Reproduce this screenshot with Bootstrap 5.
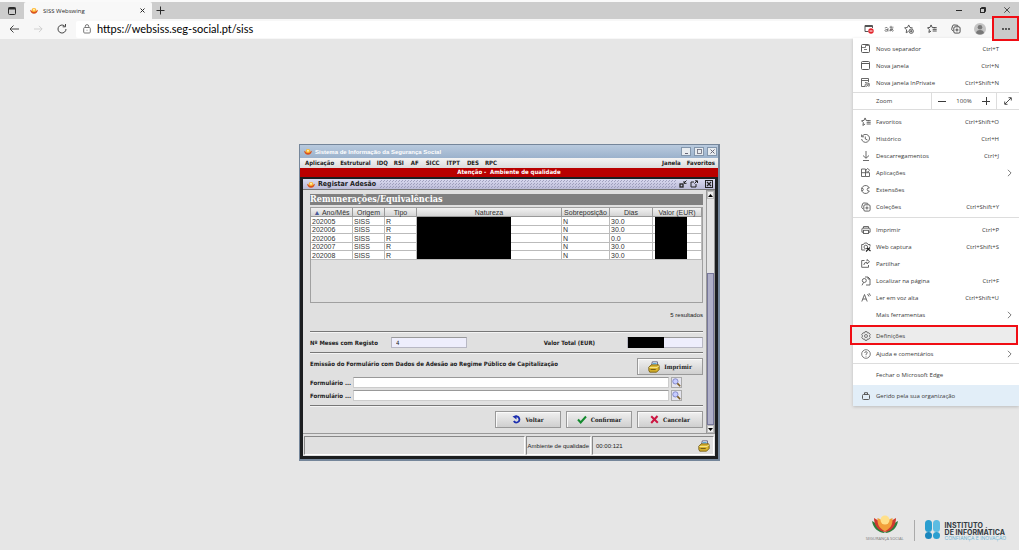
<!DOCTYPE html>
<html lang="pt">
<head>
<meta charset="utf-8">
<meta name="viewport" content="width=device-width, initial-scale=1">
<title>SISS Webswing</title>
<link href="https://cdn.jsdelivr.net/npm/bootstrap@5.3.0/dist/css/bootstrap.min.css" rel="stylesheet">
<style>
  body { font-family: "Open Sans", sans-serif; font-size: 6px; line-height: 8px; color: #2b2b2b; background: #e6e6e6; border-top: 2px solid #fafafa; }
  button, input { font: inherit; color: inherit; padding: 0; border: 0; background: none; border-radius: 0; min-width: 0; line-height: inherit; }
  svg { display: block; flex: none; fill: none; stroke: currentColor; stroke-width: 1; }

  /* browser chrome */
  .tabstrip { background: #cdcdcd; height: 17px; }
  .tab-actions { width: 24px; }
  .page-tab { width: 128px; background: #f8f8f8; padding: 0 7px 0 6px; gap: 5px; border-radius: 2px 2px 0 0; }
  .win-ctl { width: 24px; height: 15px; display: flex; align-items: center; justify-content: center; }
  .toolbar { background: #f7f7f7; height: 20px; z-index: 10; padding-left: 2px; }
  .nav-btn { width: 24px; height: 20px; display: flex; align-items: center; justify-content: center; color: #444; }
  .address { background: #fff; height: 17px; border-radius: 2px; margin-left: 2px; padding: 0 1px 0 7px; gap: 6px; }
  .address input { font-family: Lato, "Open Sans", sans-serif; font-size: 11px; line-height: 16px; height: 16px; color: #000; outline: 0; }
  .bar-icon { width: 20px; height: 17px; display: flex; align-items: center; justify-content: center; color: #555; }
  .more-btn { width: 27px; height: 25px; background: #cacaca; border: 2px solid #f00d14; z-index: 12; margin: -3px 0 -2px 0; display: flex; align-items: center; justify-content: center; }

  /* settings menu */
  .edge-menu { right: 0; top: 19px; width: 166px; background: #fff; z-index: 11; box-shadow: 0 1px 3px rgba(0,0,0,.18); padding-top: 2px; color: #3a3a3a; }
  .mi { display: flex; align-items: center; width: 100%; height: 17px; padding-left: 7px; text-align: left; }
  .mi .lbl { flex: 1; margin-left: 5px; }
  .mi .ico { width: 11px; display: flex; justify-content: center; color: #5a5a5a; }
  .mi .tail { width: 20px; display: flex; justify-content: center; color: #5a5a5a; }
  .zoomrow { border-top: 1px solid #ddd; border-bottom: 1px solid #ddd; height: 18px; margin: 1px 0 3px; }
  .zoomrow .lbl { padding-left: 23px; width: 78px; }
  .zoomrow .ctl { border-left: 1px solid #ddd; height: 16px; padding: 0 6px; width: 65px; }
  .zoomrow .full { border-left: 1px solid #ddd; height: 16px; width: 23px; display: flex; align-items: center; justify-content: center; }
  .menu-line { border-top: 1px solid #ddd; margin: 2px 0 3px; }
  .menu-line.last { margin: 1px 0; }
  .mi.closing { height: 20px; }
  .mi.picked { background: #ececec; border: 2px solid #f00d14; height: 20px; padding: 2px 0 0 8px; margin: 2px 0 0 -3px; width: 168px; }
  .mi.managed { background: #e2eef8; height: 21px; }

  /* remote desktop area */
  .stage { min-height: calc(100vh - 39px); padding-top: 105px; }
  .swing { width: 421px; border: 1px solid #75869a; border-right-width: 2px; border-bottom-width: 2px; background: #e0e0e0; font-family: "DejaVu Sans Condensed", "DejaVu Sans", sans-serif; color: #222; }
  .swing-title { height: 13px; background: linear-gradient(#b9cade, #9bb2cc); color: #fff; font-family: "Liberation Sans", sans-serif; font-weight: 700; padding: 0 1px 0 4px; gap: 3px; }
  .sq-gap { gap: 3px; }
  .sq-btn { width: 10px; height: 9px; background: #e8ecf0; border: 1px solid #8396ac; display: flex; align-items: center; justify-content: center; color: #667; }
  .swing-menu { height: 10px; background: linear-gradient(#f4f4f4, #dcdcdc); font-weight: 700; padding: 0 3px 0 5px; gap: 6px; }
  .swing-menu a { color: #222; text-decoration: none; }
  .swing-menu .abbr { margin-left: 1px; }
  .warn { height: 9px; background: #b80000; color: #fff; font-weight: 700; }
  .inner { border: 3px solid #1c1e20; border-top-width: 2px; background: #e0e0e0; }
  .inner-title { height: 11px; background: linear-gradient(#dadaf0, #bcbcd8); border-bottom: 1px solid #777; color: #222; font-size: 7px; font-weight: 700; padding: 0 2px 0 4px; gap: 3px; }
  .grip { flex: 1; height: 8px; background-image: radial-gradient(#8e8eae 35%, transparent 40%), radial-gradient(#8e8eae 35%, transparent 40%); background-size: 3px 3px; background-position: 0 0, 1px 2px; opacity: .7; }
  .pane { padding: 4px 3px 5px 7px; border-bottom: 1px solid #999; }
  .vbar { width: 9px; border: 1px solid #999; background: #e4e4e4; }
  .vbar .arrow { height: 8px; display: flex; align-items: center; justify-content: center; background: #eee; border: 1px solid #bbb; }
  .vbar .track { flex: 74; }
  .vbar .thumb { flex: 150; background: radial-gradient(#8484a4 35%, #b0b0c8 45%); background-size: 2px 2px; border: 1px solid #77779a; }
  .head-band { background: #808080; color: #fff; font-family: "DejaVu Serif Condensed", "DejaVu Serif", serif; font-weight: 700; font-size: 9px; line-height: 10px; height: 11px; margin-bottom: 2px; }
  .grid-box { border: 1px solid #a0a0a0; height: 96px; margin-bottom: 8px; }
  .grid-tbl { width: 100%; table-layout: fixed; border-collapse: separate; border-spacing: 0; font-family: "Liberation Sans", sans-serif; font-size: 7px; line-height: 7px; color: #333; }
  .grid-tbl th { font-weight: 400; text-align: center; height: 9px; padding: 0; background: linear-gradient(#f2f2f2, #d4d4d4); border-right: 1px solid #999; border-bottom: 1px solid #999; white-space: nowrap; }
  .grid-tbl td { background: #fff; padding: 0 0 0 1px; border-right: 1px solid #bbb; border-bottom: 1px solid #bbb; height: 9px; }
  .grid-tbl tr:nth-child(even) td { height: 8px; }
  .sort-up { color: #4a5a9a; }
  .c-date { width: 42px; } .c-short { width: 32px; } .c-over { width: 48px; } .c-days { width: 43px; } .c-value { width: 49px; }
  .veil { background: #000; top: 9px; height: 42px; }
  .veil-nature { left: 106px; width: 94px; }
  .veil-value { right: 15px; width: 32px; }
  .veil-total { background: #000; left: 1px; top: 0; width: 36px; height: 11px; }
  .results { font-family: "Liberation Sans", sans-serif; margin-bottom: 12px; }
  .rule { border-top: 1px solid #777; border-bottom: 1px solid #f4f4f4; height: 2px; }
  .bold { font-weight: 700; white-space: nowrap; }
  .form-head { padding-top: 2px; }
  .fld { background: #eeeefc; border: 1px solid #b8b8c4; border-top-color: #999; height: 11px; }
  .fld.plain { background: #fff; border-color: #ccc; border-top-color: #999; }
  .frow { margin-top: 2px; padding-right: 21px; gap: 2px; }
  .sbtn { width: 66px; height: 17px; border: 1px solid #999; background: linear-gradient(#f0f0f0, #cfcfcf); font-family: "DejaVu Serif Condensed", "DejaVu Serif", serif; font-weight: 700; display: flex; align-items: center; justify-content: center; gap: 4px; box-shadow: inset 1px 1px #fafafa; }
  .actions { gap: 5px; }
  .lookup { width: 11px; height: 11px; border: 1px solid #aaa; background: #e4e4ee; display: flex; align-items: center; justify-content: center; }
  .status { padding: 2px 1px 1px; gap: 1px; font-family: "Liberation Sans", sans-serif; }
  .status > div { height: 19px; border: 1px solid #888; border-right-color: #fff; border-bottom-color: #fff; display: flex; align-items: center; }
  .st-env { padding: 0 1px; }
  .st-time { width: 122px; padding: 0 3px; }
  .w-label { width: 41px; }
  .w-meses { width: 81px; } .w-small { width: 76px; }

  .logos { margin-top: auto; padding: 0 13px 9px 0; gap: 10px; color: #333; }
  .ss-mark { gap: 3px; }
  .ss-name { font-size: 4px; line-height: 5px; color: #777; }
  .ii { font-family: Inter, "Open Sans", sans-serif; font-weight: 700; font-size: 7px; line-height: 7px; color: #333b42; border-left: 1px solid #aaa; padding-left: 10px; }
  .ii-text { padding-top: 2px; }
  .ii small { font-size: 5px; line-height: 5px; font-weight: 400; color: #72b7d6; display: block; }
</style>
</head>
<body>
<svg width="0" height="0" class="position-absolute" aria-hidden="true">
  <symbol id="flower" viewBox="0 0 26 18"><g stroke="none"><path d="M0 6C1 13 6 17.500 13 18C9 14 5 8 0 6Z" fill="#2f7d3b"/><path d="M26 6C25 13 20 17.500 13 18C17 14 21 8 26 6Z" fill="#2f7d3b"/><path d="M2 3C2 10 6 16 13 17C12 11 8 6 2 3Z" fill="#cf3a30"/><path d="M24 3C24 10 20 16 13 17C14 11 18 6 24 3Z" fill="#cf3a30"/><path d="M5.500 3C5 10 8 14 13 16C18 14 21 10 20.500 3C17 4 15 6 13 9C11 6 9 4 5.500 3Z" fill="#f2a03a"/><circle cx="13" cy="5" r="4.500" fill="#ffe08a"/></g></symbol>
  <symbol id="sun" viewBox="0 0 10 8"><g stroke="none"><path d="M0 3Q1 8 5 8Q9 8 10 3Q7 5 5 5Q3 5 0 3Z" fill="#d9531e"/><ellipse cx="5" cy="3.500" rx="3" ry="2.500" fill="#ffb62e"/><circle cx="5" cy="3" r="1.300" fill="#fff0b0"/></g></symbol>
  <symbol id="fav" viewBox="0 0 16 16"><path d="M6.500 1.500L8.300 5.500L12.500 6M6.500 1.500L4.700 5.500L.8 6L3.800 9L3 13.500L6.500 11.300M9 8.500H15.500M9 11.200H15.500M11 5.800H15.500"/></symbol>
  <symbol id="coll" viewBox="0 0 16 16"><path d="M3.500 11.500L2 10Q.8 9 1.200 7.500L2.500 3Q3 1.300 5 1.500L10 2Q11.500 2.200 11.500 4"/><rect x="4.500" y="4.500" width="10" height="10" rx="2"/><path d="M9.500 7V12M7 9.500H12"/></symbol>
  <symbol id="printer" viewBox="0 0 16 16"><path d="M4 5V2.500H12V5M4 11.500H1.500V6.500Q1.500 5 3 5H13Q14.500 5 14.500 6.500V11.500H12"/><rect x="4" y="8.500" width="8" height="5"/></symbol>
  <symbol id="chev" viewBox="0 0 6 10"><path d="M1 1L5 5L1 9"/></symbol>
  <symbol id="goldprint" viewBox="0 0 14 14"><path d="M4 6L5 1H11L11 6" fill="#eef6ff" stroke="#557"/><path d="M1 7L4 4.500H12.500L13 6V10L10 13H2L1 11Z" fill="#d9b32c" stroke="#6d5510"/><path d="M1.500 7.500H10.500L13 5.500" stroke="#fff0a0"/><path d="M3 10H9" stroke="#5b4a14"/><path d="M5.500 3H10" stroke="#3a9ad0"/></symbol>
  <symbol id="glass" viewBox="0 0 12 12"><circle cx="4.500" cy="4.500" r="3.500" fill="#c6ccff" stroke="#7076b8"/><path d="M7.200 7.200L11 11" stroke="#7a5a20" stroke-width="2"/></symbol>
</svg>

<header>
  <div class="tabstrip d-flex">
    <button class="tab-actions d-flex align-items-center justify-content-center" aria-label="Ações de separador"><svg width="8" height="8" viewBox="0 0 8 8"><rect x=".5" y=".5" width="7" height="7" rx="1"/><path d="M.5 1.500H7.500" stroke-width="2"/></svg></button>
    <div class="page-tab d-flex align-items-center">
      <svg width="8" height="7"><use href="#sun"/></svg><span class="flex-grow-1">SISS Webswing</span>
      <button aria-label="Fechar"><svg width="5" height="5" viewBox="0 0 5 5"><path d="M.5 .5L4.500 4.500M4.500 .5L.5 4.500"/></svg></button>
    </div>
    <button class="px-1" aria-label="Novo separador"><svg width="9" height="9" viewBox="0 0 9 9"><path d="M4.500 .5V8.500M.5 4.500H8.500"/></svg></button>
    <div class="d-flex ms-auto">
      <button class="win-ctl" aria-label="Minimizar"><svg width="6" height="6" viewBox="0 0 6 6"><path d="M0 3.500H6"/></svg></button>
      <button class="win-ctl" aria-label="Restaurar"><svg width="6" height="6" viewBox="0 0 6 6"><path d="M1.500 1.500V.5H5.500V4.500H4.500"/><rect x=".5" y="1.500" width="4" height="4"/></svg></button>
      <button class="win-ctl" aria-label="Fechar janela"><svg width="6" height="6" viewBox="0 0 6 6"><path d="M.3 .3L5.700 5.700M5.700 .3L.3 5.700" stroke-width=".8"/></svg></button>
    </div>
  </div>

  <div class="toolbar d-flex align-items-center position-relative">
    <button class="nav-btn" aria-label="Retroceder"><svg width="10" height="8" viewBox="0 0 10 8"><path d="M10 4H1M4.500 .5L1 4L4.500 7.500"/></svg></button>
    <button class="nav-btn" aria-label="Avançar"><svg width="9" height="8" viewBox="0 0 10 8" color="#ccc"><path d="M0 4H9M5.500 .5L9 4L5.500 7.500"/></svg></button>
    <button class="nav-btn" aria-label="Atualizar"><svg width="10" height="10" viewBox="0 0 10 10"><path d="M9 5A4 4 0 1 1 7.500 1.900M8.500 0V2.800H5.700"/></svg></button>
    <div class="address d-flex align-items-center flex-grow-1">
      <svg width="8" height="10" viewBox="0 0 8 10" color="#777"><rect x=".7" y="3.500" width="6.600" height="5.500" rx="1"/><path d="M2.300 3.500V2.300A1.700 1.700 0 0 1 5.700 2.300V3.500M4 5.800V6.600" /></svg>
      <input class="flex-grow-1" type="text" aria-label="Endereço" value="https://websiss.seg-social.pt/siss">
      <div class="d-flex">
        <button class="bar-icon" aria-label="Pop-up bloqueado"><svg width="10" height="10" viewBox="0 0 10 10"><path d="M4.500 7.500H1V1.500H8.500V4M1 2.500H8.500"/><circle cx="7" cy="7" r="2.700" fill="#e3242b" stroke="none"/><path d="M5.500 7H8.500" stroke="#fff"/></svg></button>
        <button class="bar-icon" aria-label="Traduzir"><svg width="10" height="8" viewBox="0 0 10 8"><path d="M.8 3Q3.500 1.500 4 3.500V6.500M4 4.500Q.8 4.200 .8 5.600Q1.500 7.300 4 5.500M5.500 2.200H9.500M7 .8V5.800M8.800 3.300Q7.500 6.500 5.800 6Q5.200 4.200 8 4Q10.200 4.800 8.500 6.700" stroke-width=".7"/></svg></button>
        <button class="bar-icon" aria-label="Adicionar aos favoritos"><svg width="10" height="10" viewBox="0 0 16 16"><g stroke-width="1.500"><path d="M14 6.500L9.500 5.500L7.500 1.500L5.500 5.500L1 6.200L4.200 9.300L3.500 14L7 12"/><circle cx="11.500" cy="11.500" r="3.500"/><path d="M11.500 9.500V13.500M9.500 11.500H13.500"/></g></svg></button>
      </div>
    </div>
    <div class="d-flex align-items-center">
      <button class="nav-btn" aria-label="Favoritos"><svg width="10" height="10"><use href="#fav" stroke-width="1.500"/></svg></button>
      <button class="nav-btn" aria-label="Coleções"><svg width="10" height="10"><use href="#coll" stroke-width="1.500"/></svg></button>
      <button class="nav-btn" aria-label="Perfil"><svg width="12" height="12" viewBox="0 0 12 12"><g stroke="none"><circle cx="6" cy="6" r="6" fill="#c4c4c4"/><circle cx="6" cy="4.300" r="2.300" fill="#777"/><path d="M2 10Q2.500 7 6 7Q9.500 7 10 10Q6 13 2 10Z" fill="#777"/></g></svg></button>
      <button class="more-btn position-relative" aria-label="Definições e mais"><svg width="8" height="2" viewBox="0 0 8 2"><g fill="#222" stroke="none"><circle cx="1" cy="1" r=".9"/><circle cx="4" cy="1" r=".9"/><circle cx="7" cy="1" r=".9"/></g></svg></button>
    </div>

    <nav class="edge-menu position-absolute" aria-label="Menu">
      <button class="mi"><span class="ico"><svg width="9" height="9" viewBox="0 0 9 9"><rect x=".5" y=".5" width="8" height="8" rx="1"/><path d="M.5 3.500H4.500V1.500H8M3 5.500H6" stroke-width=".8"/></svg></span><span class="lbl">Novo separador</span><span>Ctrl+T</span><span class="tail"></span></button>
      <button class="mi"><span class="ico"><svg width="9" height="9" viewBox="0 0 9 9"><rect x=".5" y=".5" width="8" height="8" rx="1"/><path d="M.5 2.500H8.500"/></svg></span><span class="lbl">Nova janela</span><span>Ctrl+N</span><span class="tail"></span></button>
      <button class="mi"><span class="ico"><svg width="9" height="9" viewBox="0 0 9 9"><path d="M4 8.500H.5V.5H7.500V4M.5 2.500H7.500M4 4.500L8.500 5.500" stroke-width=".9"/><circle cx="5.200" cy="7.200" r="1.200" stroke-width=".8"/><circle cx="7.800" cy="7.200" r="1" stroke-width=".8"/></svg></span><span class="lbl">Nova janela InPrivate</span><span>Ctrl+Shift+N</span><span class="tail"></span></button>
      <div class="zoomrow d-flex align-items-center">
        <span class="lbl">Zoom</span>
        <div class="ctl d-flex align-items-center justify-content-between"><button aria-label="Reduzir"><svg width="8" height="8" viewBox="0 0 8 8"><path d="M0 4.500H8"/></svg></button><span>100%</span><button aria-label="Ampliar"><svg width="8" height="8" viewBox="0 0 8 8"><path d="M4.500 0V8M0 4.500H8"/></svg></button></div>
        <button class="full" aria-label="Ecrã inteiro"><svg width="8" height="8" viewBox="0 0 8 8"><path d="M1 7L7 1M4.500 .7H7.300V3.500M.7 4.500V7.300H3.500" stroke-width=".9"/></svg></button>
      </div>
      <button class="mi"><span class="ico"><svg width="10" height="10"><use href="#fav" stroke-width="1.500"/></svg></span><span class="lbl">Favoritos</span><span>Ctrl+Shift+O</span><span class="tail"></span></button>
      <button class="mi"><span class="ico"><svg width="9" height="9" viewBox="0 0 9 9"><path d="M1 2.500A4 4 0 1 1 .6 5M.6 .5V2.800H3M4.300 2.500V5L6.500 6" stroke-width=".9"/></svg></span><span class="lbl">Histórico</span><span>Ctrl+H</span><span class="tail"></span></button>
      <button class="mi"><span class="ico"><svg width="8" height="10" viewBox="0 0 8 10"><path d="M4 0V7M1 4.500L4 7.300L7 4.500M1 9.500H7" stroke-width=".9"/></svg></span><span class="lbl">Descarregamentos</span><span>Ctrl+J</span><span class="tail"></span></button>
      <button class="mi"><span class="ico"><svg width="9" height="9" viewBox="0 0 9 9"><path d="M.5 1H4.500V8.500H.5ZM.5 4.700H8.500V8.500H4.500M6.700 .4L8.600 2.300L6.700 4.200L4.800 2.300Z" stroke-width=".9"/></svg></span><span class="lbl">Aplicações</span><span class="tail"><svg width="5" height="8"><use href="#chev"/></svg></span></button>
      <button class="mi"><span class="ico"><svg width="9" height="9" viewBox="0 0 9 9"><path d="M8.300 3A4 4 0 1 0 8.300 6Q6.200 6.400 6.200 4.500Q6.200 2.600 8.300 3ZM.6 3.300Q2.300 3 2.300 4.500Q2.300 6 .6 5.700" stroke-width=".9"/></svg></span><span class="lbl">Extensões</span><span class="tail"></span></button>
      <button class="mi"><span class="ico"><svg width="10" height="10"><use href="#coll" stroke-width="1.500"/></svg></span><span class="lbl">Coleções</span><span>Ctrl+Shift+Y</span><span class="tail"></span></button>
      <div class="menu-line"></div>
      <button class="mi"><span class="ico"><svg width="10" height="10"><use href="#printer" stroke-width="1.500"/></svg></span><span class="lbl">Imprimir</span><span>Ctrl+P</span><span class="tail"></span></button>
      <button class="mi"><span class="ico"><svg width="10" height="10" viewBox="0 0 10 10"><path d="M4 8H.7V2.500H2.500L3.500 1H6L7 2.500H9V4.500" stroke-width=".9"/><circle cx="4.800" cy="5" r="1.800" stroke-width=".9"/><path d="M5 9.500L9 5.500M6 6L9.500 9" stroke="#222" stroke-width="1.100"/></svg></span><span class="lbl">Web captura</span><span>Ctrl+Shift+S</span><span class="tail"></span></button>
      <button class="mi"><span class="ico"><svg width="9" height="9" viewBox="0 0 9 9"><path d="M3.500 1.500H.7V8.300H7.500V6M2.800 6Q3 3.200 6 3.200V5L8.500 2.700L6 .5V2" stroke-width=".9"/></svg></span><span class="lbl">Partilhar</span><span class="tail"></span></button>
      <button class="mi"><span class="ico"><svg width="10" height="10" viewBox="0 0 10 10"><path d="M4 1H7L9 3V9H5M7 1V3H9" stroke-width=".9"/><circle cx="3.300" cy="4.500" r="2" stroke-width=".9"/><path d="M2.500 6.500L1 9.300" stroke-width=".9"/></svg></span><span class="lbl">Localizar na página</span><span>Ctrl+F</span><span class="tail"></span></button>
      <button class="mi"><span class="ico"><svg width="10" height="9" viewBox="0 0 10 9"><path d="M.8 8.500L3.500 1.500L6.200 8.500M1.800 6H5.200M6.500 1L8 3.500M8 .2L9.500 2.800" stroke-width=".9"/></svg></span><span class="lbl">Ler em voz alta</span><span>Ctrl+Shift+U</span><span class="tail"></span></button>
      <button class="mi"><span class="ico"></span><span class="lbl">Mais ferramentas</span><span class="tail"><svg width="5" height="8"><use href="#chev"/></svg></span></button>
      <button class="mi picked"><span class="ico"><svg width="10" height="10" viewBox="0 0 10 10"><path d="M4 .6H6L6.400 2L8 1.800L9.300 3.700L8.300 5L9.300 6.300L8 8.200L6.400 8L6 9.400H4L3.600 8L2 8.200L.7 6.300L1.700 5L.7 3.700L2 1.800L3.600 2Z" stroke-width=".8"/><circle cx="5" cy="5" r="1.500" stroke-width=".8"/></svg></span><span class="lbl">Definições</span></button>
      <button class="mi"><span class="ico"><svg width="10" height="10" viewBox="0 0 10 10"><circle cx="5" cy="5" r="4.300" stroke-width=".8"/><path d="M3.700 4Q3.700 2.700 5 2.700Q6.300 2.700 6.300 3.800Q6.300 4.600 5 5.200V6M5 6.800V7.600" stroke-width=".8"/></svg></span><span class="lbl">Ajuda e comentários</span><span class="tail"><svg width="5" height="8"><use href="#chev"/></svg></span></button>
      <div class="menu-line last"></div>
      <button class="mi closing"><span class="ico"></span><span class="lbl">Fechar o Microsoft Edge</span></button>
      <button class="mi managed"><span class="ico"><svg width="8" height="8" viewBox="0 0 8 8"><rect x=".5" y="2.500" width="7" height="5" rx="1"/><path d="M2.500 2.500V.7H5.500V2.500"/></svg></span><span class="lbl">Gerido pela sua organização</span></button>
    </nav>
  </div>
</header>

<main class="stage d-flex flex-column">
  <section class="swing mx-auto">
    <div class="swing-title d-flex align-items-center">
      <svg width="8" height="7"><use href="#sun"/></svg><span class="flex-grow-1">Sistema de Informação da Segurança Social</span>
      <div class="d-flex sq-gap">
        <button class="sq-btn" aria-label="Minimizar"><svg width="5" height="5" viewBox="0 0 5 5"><path d="M1 4.500H4"/></svg></button>
        <button class="sq-btn" aria-label="Maximizar"><svg width="5" height="5" viewBox="0 0 5 5"><rect x=".5" y=".5" width="4" height="4" stroke-width=".8"/></svg></button>
        <button class="sq-btn" aria-label="Fechar"><svg width="5" height="5" viewBox="0 0 5 5"><path d="M.5 .5L4.500 4.500M4.500 .5L.5 4.500"/></svg></button>
      </div>
    </div>
    <nav class="swing-menu d-flex align-items-center">
      <a href="#">Aplicação</a><a href="#">Estrutural</a><a href="#">IDQ</a><a href="#">RSI</a><a href="#" class="abbr">AF</a><a href="#" class="abbr">SICC</a><a href="#" class="abbr">ITPT</a><a href="#" class="abbr">DES</a><a href="#">RPC</a>
      <a href="#" class="ms-auto">Janela</a><a href="#">Favoritos</a>
    </nav>
    <div class="warn text-center">Atenção -&nbsp; Ambiente de qualidade</div>
    <div class="inner">
      <div class="inner-title d-flex align-items-center">
        <svg width="8" height="7"><use href="#sun"/></svg><span>Registar Adesão</span><span class="grip"></span>
        <button aria-label="Reduzir"><svg width="8" height="8" viewBox="0 0 8 8"><rect x="1" y="4" width="3" height="3" stroke-width="1.300"/><path d="M7.500 .5L5 3M5 1V3.300H7.500"/></svg></button>
        <button aria-label="Expandir"><svg width="8" height="8" viewBox="0 0 8 8"><path d="M4 2H1V7H6V4M4.500 3.500L7 1M5 .8H7.500V3"/></svg></button>
        <button class="ms-1" aria-label="Fechar"><svg width="8" height="8" viewBox="0 0 8 8"><rect x=".5" y=".5" width="7" height="7"/><path d="M2 2L6 6M6 2L2 6" stroke-width="1.300"/></svg></button>
      </div>
      <div class="d-flex">
        <div class="pane flex-grow-1">
          <div class="head-band">Remunerações/Equivalências</div>
          <div class="grid-box position-relative">
            <table class="grid-tbl">
              <colgroup><col class="c-date"><col class="c-short"><col class="c-short"><col><col class="c-over"><col class="c-days"><col class="c-value"></colgroup>
              <thead><tr><th><span class="sort-up">▲</span> Ano/Mês</th><th>Origem</th><th>Tipo</th><th>Natureza</th><th>Sobreposição</th><th>Dias</th><th>Valor (EUR)</th></tr></thead>
              <tbody>
                <tr><td>202005</td><td>SISS</td><td>R</td><td></td><td>N</td><td>30.0</td><td></td></tr>
                <tr><td>202006</td><td>SISS</td><td>R</td><td></td><td>N</td><td>30.0</td><td></td></tr>
                <tr><td>202006</td><td>SISS</td><td>R</td><td></td><td>N</td><td>0.0</td><td></td></tr>
                <tr><td>202007</td><td>SISS</td><td>R</td><td></td><td>N</td><td>30.0</td><td></td></tr>
                <tr><td>202008</td><td>SISS</td><td>R</td><td></td><td>N</td><td>30.0</td><td></td></tr>
              </tbody>
            </table>
            <div class="veil veil-nature position-absolute"></div>
            <div class="veil veil-value position-absolute"></div>
          </div>
          <div class="results text-end">5 resultados</div>
          <div class="rule"></div>
          <div class="d-flex align-items-center py-1">
            <label class="bold w-meses" for="meses">Nº Meses com Registo</label>
            <input class="fld w-small ps-1" id="meses" value="4">
            <label class="bold ms-auto pe-4" for="total">Valor Total (EUR)</label>
            <div class="position-relative d-flex ms-2"><input class="fld w-small" id="total"><span class="veil-total position-absolute"></span></div>
          </div>
          <div class="rule"></div>
          <div class="d-flex justify-content-between pt-1">
            <label class="bold form-head" for="print">Emissão do Formulário com Dados de Adesão ao Regime Público de Capitalização</label>
            <button class="sbtn" id="print"><svg width="12" height="12"><use href="#goldprint"/></svg>Imprimir</button>
          </div>
          <div class="d-flex align-items-center frow"><label class="bold w-label" for="f1">Formulário ...</label><input class="fld plain flex-grow-1" id="f1"><button class="lookup" aria-label="Procurar"><svg width="9" height="9"><use href="#glass"/></svg></button></div>
          <div class="d-flex align-items-center frow"><label class="bold w-label" for="f2">Formulário ...</label><input class="fld plain flex-grow-1" id="f2"><button class="lookup" aria-label="Procurar"><svg width="9" height="9"><use href="#glass"/></svg></button></div>
          <div class="rule mt-1"></div>
          <div class="d-flex justify-content-end pt-1 actions">
            <button class="sbtn"><svg width="9" height="9" viewBox="0 0 9 9"><path d="M4 1.500A3 3 0 1 1 1.800 6" stroke="#1c2fb0" stroke-width="1.800"/><path d="M.5 1.500L4.500 0V4.500Z" fill="#1c2fb0" stroke="none"/></svg>Voltar</button>
            <button class="sbtn"><svg width="10" height="9" viewBox="0 0 10 9"><path d="M1 4.500L3.700 7.500L9 1.500" stroke="#138a2e" stroke-width="2"/></svg>Confirmar</button>
            <button class="sbtn"><svg width="9" height="9" viewBox="0 0 9 9"><path d="M1.200 1.200L7.800 7.800M7.500 1L1.200 8" stroke="#cc1642" stroke-width="2"/></svg>Cancelar</button>
          </div>
        </div>
        <div class="vbar d-flex flex-column">
          <div class="arrow"><svg width="5" height="3" viewBox="0 0 5 3"><path d="M0 3L2.500 0L5 3Z" fill="#000" stroke="none"/></svg></div>
          <div class="track"></div><div class="thumb"></div>
          <div class="arrow"><svg width="5" height="3" viewBox="0 0 5 3"><path d="M0 0L2.500 3L5 0Z" fill="#000" stroke="none"/></svg></div>
        </div>
      </div>
      <div class="status d-flex">
        <div class="flex-grow-1"></div>
        <div class="st-env">Ambiente de qualidade</div>
        <div class="st-time"><span class="flex-grow-1">00:00:121</span><svg width="12" height="12"><use href="#goldprint"/></svg></div>
      </div>
    </div>
  </section>

  <footer class="logos d-flex justify-content-end align-items-end">
    <div class="ss-mark d-flex flex-column align-items-center"><svg width="26" height="18"><use href="#flower"/></svg><div class="ss-name">SEGURANÇA SOCIAL</div></div>
    <div class="ii d-flex"><svg class="me-1" width="16" height="20" viewBox="0 0 16 20"><g stroke="none"><rect width="7" height="12" rx="3.500" fill="#2b9fd0"/><rect x="8" width="7" height="12" rx="3.500" fill="#5cbce2"/><circle cx="3.500" cy="15.500" r="3.500" fill="#1b87bd"/><circle cx="11.500" cy="15.500" r="3.500" fill="#2b9fd0"/></g></svg><div class="ii-text">INSTITUTO<br>DE INFORMÁTICA<small>CONFIANÇA E INOVAÇÃO</small></div></div>
  </footer>
</main>
<script src="https://cdn.jsdelivr.net/npm/bootstrap@5.3.0/dist/js/bootstrap.bundle.min.js"></script>
</body>
</html>
